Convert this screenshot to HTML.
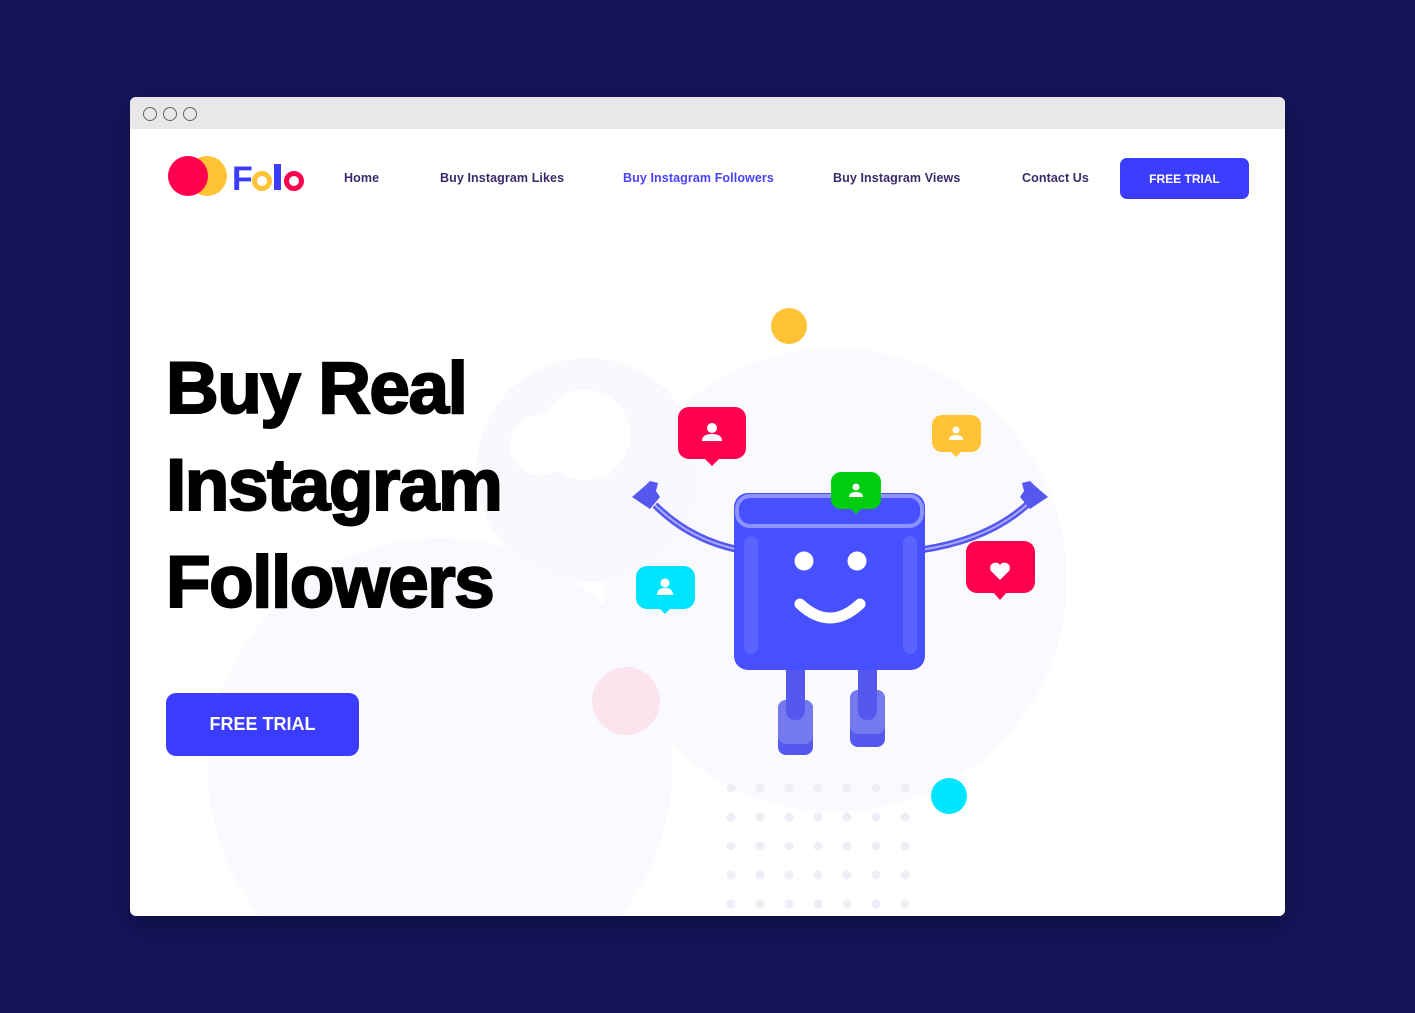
<!DOCTYPE html>
<html><head><meta charset="utf-8"><style>
*{margin:0;padding:0;box-sizing:border-box}
body{width:1415px;height:1013px;background:#15145a;position:relative;overflow:hidden;font-family:"Liberation Sans",sans-serif}
.win{position:absolute;left:130px;top:97px;width:1155px;height:819px;background:#fff;border-radius:6px;overflow:hidden;box-shadow:0 10px 30px rgba(0,0,0,.3)}
.bar{position:absolute;left:0;top:0;width:100%;height:32px;background:#e8e8e8}
.dot{position:absolute;top:10px;width:14px;height:14px;border:1.3px solid #666;border-radius:50%}
svg{position:absolute;left:0;top:0}
.nav{position:absolute;top:74px;font-size:12.5px;font-weight:bold;color:#3b2a6b;letter-spacing:.1px}
.btn{position:absolute;background:#3c3cff;color:#fff;font-weight:bold;display:flex;align-items:center;justify-content:center}
h1{position:absolute;left:36px;top:243px;font-size:73px;line-height:97px;font-weight:900;color:#000;letter-spacing:-1.5px;-webkit-text-stroke:2px #000}
</style></head><body>
<div class="win">
<svg width="1155" height="819" viewBox="130 97 1155 819">
<circle cx="835" cy="580" r="232" fill="#fafafe"/>
<circle cx="440" cy="770" r="232" fill="#fafafe"/>
<circle cx="588" cy="470" r="112" fill="#f9f9fd"/>
<circle cx="585" cy="435" r="45" fill="#fff"/>
<circle cx="540" cy="445" r="30" fill="#fff"/>
<circle cx="626" cy="701" r="34" fill="#fbe4ee"/>
<circle cx="789" cy="326" r="18" fill="#ffc335"/>
<circle cx="949" cy="796" r="18" fill="#00e5ff"/>
<g fill="#eeeef6">
<g id="r"><circle cx="731" cy="788" r="4.5"/><circle cx="760" cy="788" r="4.5"/><circle cx="789" cy="788" r="4.5"/><circle cx="818" cy="788" r="4.5"/><circle cx="847" cy="788" r="4.5"/><circle cx="876" cy="788" r="4.5"/><circle cx="905" cy="788" r="4.5"/></g>
<use href="#r" y="29"/><use href="#r" y="58"/><use href="#r" y="87"/><use href="#r" y="116"/>
</g>
<path d="M740 550 Q690 540 655 505" stroke="#5558ee" stroke-width="7" fill="none"/>
<path d="M740 550 Q690 540 655 505" stroke="#a9abff" stroke-width="2" fill="none"/>
<path d="M920 550 Q990 540 1030 502" stroke="#5558ee" stroke-width="7" fill="none"/>
<path d="M920 550 Q990 540 1030 502" stroke="#a9abff" stroke-width="2" fill="none"/>
<path d="M632 497 l14 -12 l4 -4 l8 2 l-2 8 l4 6 l-10 12 z" fill="#5558ee"/>
<path d="M1048 497 l-14 -12 l-4 -4 l-8 2 l2 8 l-4 6 l10 12 z" fill="#5558ee"/>
<rect x="778" y="700" width="35" height="55" rx="8" fill="#5558ee"/>
<rect x="778" y="700" width="35" height="44" rx="8" fill="#7479f0"/>
<rect x="850" y="690" width="35" height="57" rx="8" fill="#5558ee"/>
<rect x="850" y="690" width="35" height="44" rx="8" fill="#7479f0"/>
<rect x="786" y="650" width="19" height="70" rx="9" fill="#5558ee"/>
<rect x="858" y="650" width="19" height="70" rx="9" fill="#5558ee"/>
<rect x="734" y="493" width="191" height="177" rx="14" fill="#4750ff"/>
<rect x="737" y="496" width="185" height="30" rx="13" fill="none" stroke="#8d92ff" stroke-width="4"/>
<rect x="744" y="536" width="14" height="118" rx="7" fill="#5b63ff"/>
<rect x="903" y="536" width="14" height="118" rx="7" fill="#5b63ff"/>
<circle cx="804" cy="561" r="9.5" fill="#fff"/>
<circle cx="857" cy="561" r="9.5" fill="#fff"/>
<path d="M800 604 Q830 632 860 604" stroke="#fff" stroke-width="11" stroke-linecap="round" fill="none"/>
<g>
<rect x="678" y="407" width="68" height="52" rx="11" fill="#ff004f"/><path d="M704 458 l8 8 l8 -8z" fill="#ff004f"/>
<circle cx="712" cy="428" r="5" fill="#fff"/><path d="M702 441 q0 -7 10 -7 q10 0 10 7z" fill="#fff"/>
</g>
<g>
<rect x="932" y="415" width="49" height="37" rx="10" fill="#ffc335"/><path d="M950 451 l6 6 l6 -6z" fill="#ffc335"/>
<circle cx="956" cy="430" r="3.5" fill="#fff"/><path d="M949 440 q0 -5 7 -5 q7 0 7 5z" fill="#fff"/>
</g>
<g>
<rect x="831" y="472" width="50" height="37" rx="10" fill="#00cc10"/><path d="M850 508 l6 6 l6 -6z" fill="#00cc10"/>
<circle cx="856" cy="487" r="3.5" fill="#fff"/><path d="M849 497 q0 -5 7 -5 q7 0 7 5z" fill="#fff"/>
</g>
<g>
<rect x="636" y="566" width="59" height="43" rx="11" fill="#00e5ff"/><path d="M659 608 l6 6 l6 -6z" fill="#00e5ff"/>
<circle cx="665" cy="583" r="4.5" fill="#fff"/><path d="M657 595 q0 -7 8 -7 q8 0 8 7z" fill="#fff"/>
</g>
<g>
<rect x="966" y="541" width="69" height="52" rx="11" fill="#ff004f"/><path d="M993 592 l7 8 l7 -8z" fill="#ff004f"/>
<path d="M1000 580 l-9 -9 a5 5 0 0 1 9 -6 a5 5 0 0 1 9 6z" fill="#fff"/>
</g>
<circle cx="207" cy="176" r="20" fill="#ffc335"/>
<circle cx="188" cy="176" r="20" fill="#ff004f"/>
<text x="232" y="190" font-family="Liberation Sans" font-weight="900" font-size="34" fill="#3c3cff">F</text>
<circle cx="262" cy="181" r="7.5" fill="none" stroke="#ffc335" stroke-width="5"/>
<rect x="274" y="164" width="7" height="26" fill="#3c3cff"/>
<circle cx="294" cy="181" r="7.5" fill="none" stroke="#ff004f" stroke-width="5"/>
</svg>
<div class="bar"></div>
<div class="dot" style="left:13px"></div><div class="dot" style="left:33px"></div><div class="dot" style="left:53px"></div>
<div class="nav" style="left:214px">Home</div>
<div class="nav" style="left:310px">Buy Instagram Likes</div>
<div class="nav" style="left:493px;color:#4a40ff">Buy Instagram Followers</div>
<div class="nav" style="left:703px">Buy Instagram Views</div>
<div class="nav" style="left:892px">Contact Us</div>
<div class="btn" style="left:990px;top:61px;width:129px;height:41px;border-radius:7px;font-size:12px">FREE TRIAL</div>
<h1>Buy Real<br>Instagram<br>Followers</h1>
<div class="btn" style="left:36px;top:596px;width:193px;height:63px;border-radius:10px;font-size:18px">FREE TRIAL</div>
</div>
</body></html>
